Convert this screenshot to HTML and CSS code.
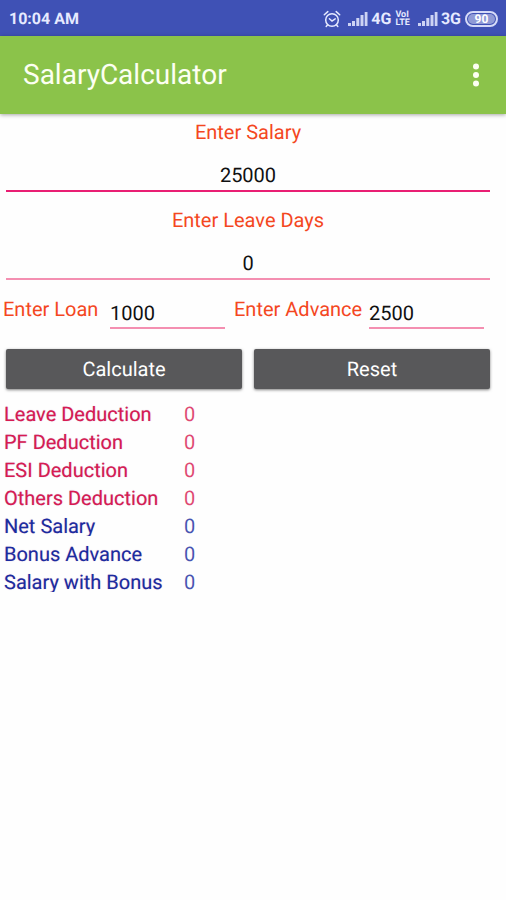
FILE: index.html
```html
<!DOCTYPE html>
<html lang="en">
<head>
<meta charset="utf-8">
<meta name="viewport" content="width=device-width, initial-scale=1">
<title>SalaryCalculator</title>
<link rel="stylesheet" href="styles.css">
</head>
<body>
<div class="status">
  <span class="clock">10:04 AM</span>
  <div class="indicators">
    <svg class="alarm" width="18" height="18" viewBox="0 0 18 18" fill="none" stroke="currentColor" stroke-width="1.5" stroke-linecap="round">
      <circle cx="9" cy="10" r="6.3"/>
      <path d="M1.3 4.8 4.8 1.6M16.7 4.8 13.2 1.6M4.6 14.8 3.2 16.5M13.4 14.8 14.8 16.5M6.4 8.8 9 11l3.2-2.2"/>
    </svg>
    <svg class="signal" width="20" height="15" viewBox="0 0 20 15" fill="currentColor">
      <path d="M0 12h3v3H0zM4 10h3v5H4zM8.300 7h3v8h-3zM12.500 4h3v11h-3zM16.700 1h2.800v14h-2.800z"/>
    </svg>
    <span class="network">4G</span>
    <span class="volte"><span>VoI</span><span>LTE</span></span>
    <svg class="signal" width="20" height="15" viewBox="0 0 20 15" fill="currentColor">
      <path d="M0 12h3v3H0zM4 10h3v5H4zM8.300 7h3v8h-3zM12.500 4h3v11h-3zM16.700 1h2.800v14h-2.800z"/>
    </svg>
    <span class="network">3G</span>
    <span class="battery"><span class="charge">90</span></span>
  </div>
</div>
<header class="appbar">
  <h1>SalaryCalculator</h1>
  <button class="more" type="button" aria-label="More options">
    <svg width="8" height="24" viewBox="0 0 8 24" fill="currentColor"><circle cx="4" cy="3.500" r="3"/><circle cx="4" cy="12" r="3"/><circle cx="4" cy="20.500" r="3"/></svg>
  </button>
</header>
<main>
  <form>
    <div class="field">
      <label for="salary">Enter Salary</label>
      <input class="active" id="salary" type="text" inputmode="numeric" value="25000">
    </div>
    <div class="field">
      <label for="leave">Enter Leave Days</label>
      <input id="leave" type="text" inputmode="numeric" value="0">
    </div>
    <div class="pair">
      <label for="loan">Enter Loan</label>
      <input id="loan" type="text" inputmode="numeric" value="1000">
      <label for="advance">Enter Advance</label>
      <input id="advance" type="text" inputmode="numeric" value="2500">
    </div>
    <div class="actions">
      <button type="button">Calculate</button>
      <button type="reset">Reset</button>
    </div>
  </form>
  <table class="results">
    <tbody class="deductions">
      <tr><th scope="row"><span>Leave Deduction</span></th><td>0</td></tr>
      <tr><th scope="row"><span>PF Deduction</span></th><td>0</td></tr>
      <tr><th scope="row"><span>ESI Deduction</span></th><td>0</td></tr>
      <tr><th scope="row"><span>Others Deduction</span></th><td>0</td></tr>
    </tbody>
    <tbody class="totals">
      <tr><th scope="row"><span>Net Salary</span></th><td>0</td></tr>
      <tr><th scope="row"><span>Bonus Advance</span></th><td>0</td></tr>
      <tr><th scope="row"><span>Salary with Bonus</span></th><td>0</td></tr>
    </tbody>
  </table>
</main>
</body>
</html>
```
FILE: styles.css
```css
* {
  box-sizing: border-box;
}

body {
  margin: 0;
  background: #fefefe;
  color: #111;
  font: 20px/24px Roboto, sans-serif;
  text-rendering: geometricPrecision;
}

input,
button {
  margin: 0;
  border: 0;
  border-radius: 0;
  color: inherit;
  font: inherit;
  text-rendering: inherit;
}

input:focus {
  outline: none;
}

.status {
  display: flex;
  align-items: center;
  justify-content: space-between;
  height: 36px;
  padding: 1px 8px 0 9px;
  background: #3f51b5;
  color: #e6eaff;
  font-size: 16px;
  font-weight: 700;
}

.indicators {
  display: flex;
  align-items: center;
}

.alarm {
  margin-right: 7px;
}

.signal {
  margin-right: 3px;
  opacity: 0.85;
}

.network {
  margin-right: 4px;
}

.volte {
  display: grid;
  margin-right: 8px;
  font-size: 9px;
  line-height: 8px;
}

.battery {
  display: flex;
  width: 33px;
  height: 16px;
  padding: 1px;
  border: 2px solid #d5daf8;
  border-radius: 8px;
}

.charge {
  flex: 1;
  border-radius: 5px;
  background: #8f9ad6;
  color: #fff;
  font-size: 12px;
  line-height: 10px;
  text-align: center;
}

.appbar {
  position: relative;
  display: flex;
  align-items: center;
  justify-content: space-between;
  height: 78px;
  padding: 0 18px 0 23px;
  background: #8bc34a;
  box-shadow: 0 1px 4px rgba(0, 0, 0, 0.35);
  color: #fcfff2;
}

h1 {
  margin: 0;
  font-size: 28px;
  font-weight: 400;
  line-height: 36px;
}

.more {
  display: flex;
  padding: 8px;
  background: none;
}

.field {
  display: grid;
  margin: 0 16px 0 6px;
  padding-top: 6px;
  text-align: center;
}

label {
  color: #f4471f;
  white-space: nowrap;
}

.field input,
.pair input {
  width: 100%;
  min-width: 0;
  padding: 0;
  border-bottom: 2px solid #f48fb1;
  background: none;
}

.field input {
  height: 48px;
  margin-bottom: 10px;
  padding-top: 16px;
  text-align: center;
}

.field input.active {
  border-color: #e91e73;
}

.pair {
  display: grid;
  grid-template-columns: 98px 1fr 126px 1fr;
  column-gap: 9px;
  padding: 7px 22px 0 3px;
}

.pair input {
  height: 32px;
  padding-top: 2px;
}

.actions {
  display: grid;
  grid-template-columns: 1fr 1fr;
  gap: 12px;
  padding: 20px 16px 0 6px;
}

.actions button {
  height: 40px;
  border-radius: 2px;
  background: #58585a;
  box-shadow: 0 1px 3px rgba(0, 0, 0, 0.5);
  color: #fff;
}

.results {
  margin: 10px 0 0 4px;
  border-collapse: collapse;
}

.results th,
.results td {
  height: 28px;
  padding: 3px 0 0;
  text-align: left;
  vertical-align: top;
}

.results th {
  width: 180px;
  font-weight: 400;
}

/* Row labels sit in a box shorter than the line, which trims descenders. */
.results th span {
  display: block;
  height: 22px;
  overflow: hidden;
  text-shadow: 0 0 1px rgba(120, 20, 120, 0.4);
}

.results td {
  opacity: 0.8;
}

.deductions {
  color: #d81b52;
}

.totals {
  color: #1a2ca0;
}
```
